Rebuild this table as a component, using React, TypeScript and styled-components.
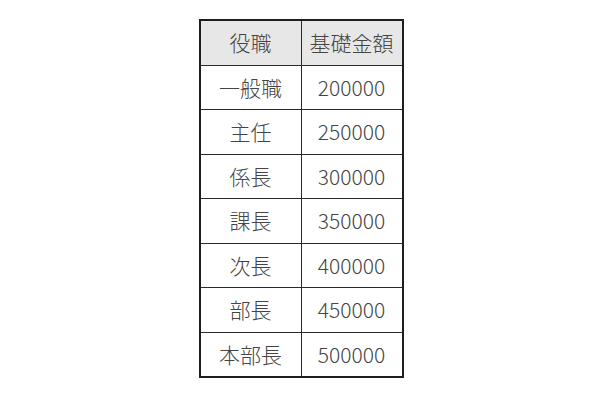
import { Fragment } from "react";
import styled, { createGlobalStyle } from "styled-components";

const GlobalStyle = createGlobalStyle`
    html, body {
        margin: 0;
        padding: 0;
        background: #ffffff;
    }
    body {
        font-family: "Noto Sans CJK JP", "Noto Sans", sans-serif;
    }
`

const Page = styled.div`
    width: 600px;
    height: 400px;
    display: flex;
    justify-content: center;
    padding-top: 19px;
    padding-left: 2px;
    box-sizing: border-box;
`
const Grid = styled.div`
    display: grid;
    grid-template-columns: 100px 100px;
    grid-auto-rows: 43.5px;
    gap: 1px;
    background: #2a2a2a;
    border: 2px solid #1e1e1e;
    align-self: flex-start;
`
const Cell = styled.div<{ $head?: boolean }>`
    display: flex;
    align-items: center;
    justify-content: center;
    background: ${props => props.$head ? "#e7e7e7" : "#ffffff"};
    color: #444444;
    font-size: 21px;
    font-weight: 300;
    line-height: 1;
`

const rows: [string, string][] = [
    ["一般職", "200000"],
    ["主任", "250000"],
    ["係長", "300000"],
    ["課長", "350000"],
    ["次長", "400000"],
    ["部長", "450000"],
    ["本部長", "500000"],
]

function App() {
    return (
        <>
            <GlobalStyle />
            <Page>
                <Grid>
                    <Cell $head>役職</Cell>
                    <Cell $head>基礎金額</Cell>
                    {rows.map(([title, amount]) => (
                        <Fragment key={title}>
                            <Cell>{title}</Cell>
                            <Cell>{amount}</Cell>
                        </Fragment>
                    ))}
                </Grid>
            </Page>
        </>
    );
}

export default App;
